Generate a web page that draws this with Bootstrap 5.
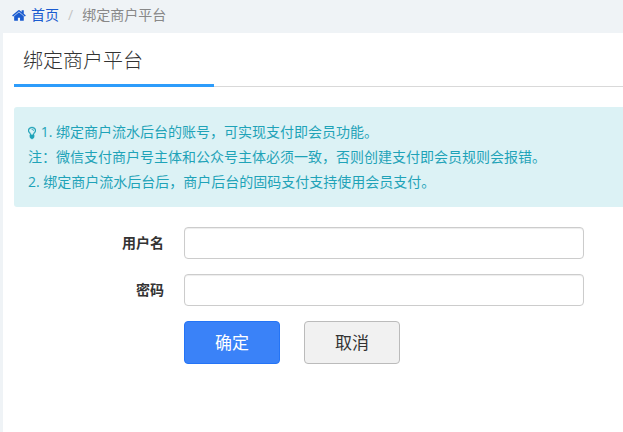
<!DOCTYPE html>
<html lang="zh-CN">
<head>
<meta charset="utf-8">
<meta name="viewport" content="width=device-width, initial-scale=1">
<title>绑定商户平台</title>
<link href="https://cdn.jsdelivr.net/npm/bootstrap@5.3.0/dist/css/bootstrap.min.css" rel="stylesheet">
<style>
body { font-family: "Open Sans", "Noto Sans CJK SC", sans-serif; font-size: 14px; line-height: 20px; color: #333; background: #eff3f6; }
.crumb-bar { height: 33px; padding: 5px 12px; }
.crumb-bar .breadcrumb { --bs-breadcrumb-divider-color: #c4c4c4; --bs-breadcrumb-item-padding-x: 9px; --bs-breadcrumb-item-active-color: #888; font-size: 14px; }
.crumb-bar a { color: #1a5bd0; gap: 4px; }
.panel { margin-left: 3px; padding-left: 11px; }
.page-head { border-bottom: 1px solid #d9d9d9; }
.page-title { width: 200px; padding: 14px 9px 10px; margin-bottom: -1px; font-size: 20px; line-height: 27px; font-weight: 300; border-bottom: 3px solid #2d9cfb; }
.tips { margin: 20px 0; padding: 12px 14px 13px; line-height: 25px; color: #1fa3b8; background: #dcf2f5; border: 0; border-radius: 3px 0 0 3px; }
.tips svg { margin-right: 1px; }
.bind-form { gap: 15px; }
.field { display: grid; grid-template-columns: 150px minmax(0, 400px); column-gap: 20px; align-items: center; padding-right: 16px; }
.field label { font-weight: 700; text-align: right; }
.field .form-control { height: 32px; border-color: #ccc; border-radius: 4px; box-shadow: inset 0 1px 1px rgba(0,0,0,.075); }
.actions { grid-column: 2; gap: 24px; }
.actions .btn { width: 96px; height: 43px; font-size: 17px; line-height: 24px; border-radius: 4px; padding: 0; }
.btn-ok { --bs-btn-color: #fff; --bs-btn-bg: #3a82f8; --bs-btn-border-color: #2474f6; --bs-btn-hover-color: #fff; --bs-btn-hover-bg: #2474f6; }
.btn-cancel { --bs-btn-color: #333; --bs-btn-bg: #f1f1f1; --bs-btn-border-color: #bbb; --bs-btn-hover-bg: #e6e6e6; }
</style>
</head>
<body class="d-flex flex-column min-vh-100">
<nav class="crumb-bar" aria-label="breadcrumb">
  <ol class="breadcrumb mb-0">
    <li class="breadcrumb-item"><a href="#" class="d-flex align-items-center text-decoration-none"><svg width="15" height="15" viewBox="0 0 1792 1792" fill="currentColor" aria-hidden="true"><path d="M1408 992v480q0 26-19 45t-45 19h-384v-384h-256v384h-384q-26 0-45-19t-19-45v-480q0-1 .5-3t.5-3l575-474 575 474q1 2 1 6zm223-69l-62 74q-8 9-21 11h-3q-13 0-21-7l-692-577-692 577q-12 8-24 7-13-2-21-11l-62-74q-8-10-7-23.500t11-21.500l719-599q32-26 76-26t76 26l244 204v-195q0-14 9-23t23-9h192q14 0 23 9t9 23v408l219 182q10 8 11 21.500t-7 23.500z"/></svg>首页</a></li>
    <li class="breadcrumb-item active" aria-current="page">绑定商户平台</li>
  </ol>
</nav>
<main class="panel bg-white flex-grow-1">
  <header class="page-head"><h1 class="page-title">绑定商户平台</h1></header>
  <div class="alert tips" role="note">
    <div><svg class="align-middle" width="8" height="14" viewBox="384 0 1024 1792" fill="currentColor" stroke="currentColor" stroke-width="40" aria-hidden="true"><path d="M1120 576q0 13-9.500 22.500t-22.500 9.500-22.500-9.500-9.500-22.500q0-46-54-71t-106-25q-13 0-22.500-9.500t-9.500-22.500 9.500-22.500 22.500-9.500q50 0 99.500 16t87 54 37.500 90zm160 0q0-72-34.500-134t-90-101.500-123-62-136.500-22.500-136.500 22.500-123 62-90 101.500-34.500 134q0 101 68 180 10 11 30.500 33t30.500 33q128 153 141 298h228q13-145 141-298 10-11 30.500-33t30.500-33q68-79 68-180zm128 0q0 155-103 268-45 49-74.500 87t-59.500 95.500-34 107.500q47 28 47 82 0 37-25 64 25 27 25 64 0 52-45 81 13 23 13 47 0 46-31.500 71t-77.500 25q-20 44-60 70t-87 26-87-26-60-70q-46 0-77.500-25t-31.500-71q0-24 13-47-45-29-45-81 0-37 25-64-25-27-25-64 0-54 47-82-4-50-34-107.500t-59.500-95.500-74.500-87q-103-113-103-268 0-99 44.500-184.500t117-142 164-89 186.500-32.500 186.500 32.500 164 89 117 142 44.500 184.500z"/></svg> 1. 绑定商户流水后台的账号，可实现支付即会员功能。</div>
    <div>注：微信支付商户号主体和公众号主体必须一致，否则创建支付即会员规则会报错。</div>
    <div>2. 绑定商户流水后台后，商户后台的固码支付支持使用会员支付。</div>
  </div>
  <form class="bind-form d-flex flex-column">
    <div class="field"><label for="username">用户名</label><input class="form-control" type="text" id="username"></div>
    <div class="field"><label for="password">密码</label><input class="form-control" type="password" id="password"></div>
    <div class="field"><div class="actions d-flex"><button type="submit" class="btn btn-ok">确定</button><button type="button" class="btn btn-cancel">取消</button></div></div>
  </form>
</main>
<script src="https://cdn.jsdelivr.net/npm/bootstrap@5.3.0/dist/js/bootstrap.bundle.min.js"></script>
</body>
</html>
